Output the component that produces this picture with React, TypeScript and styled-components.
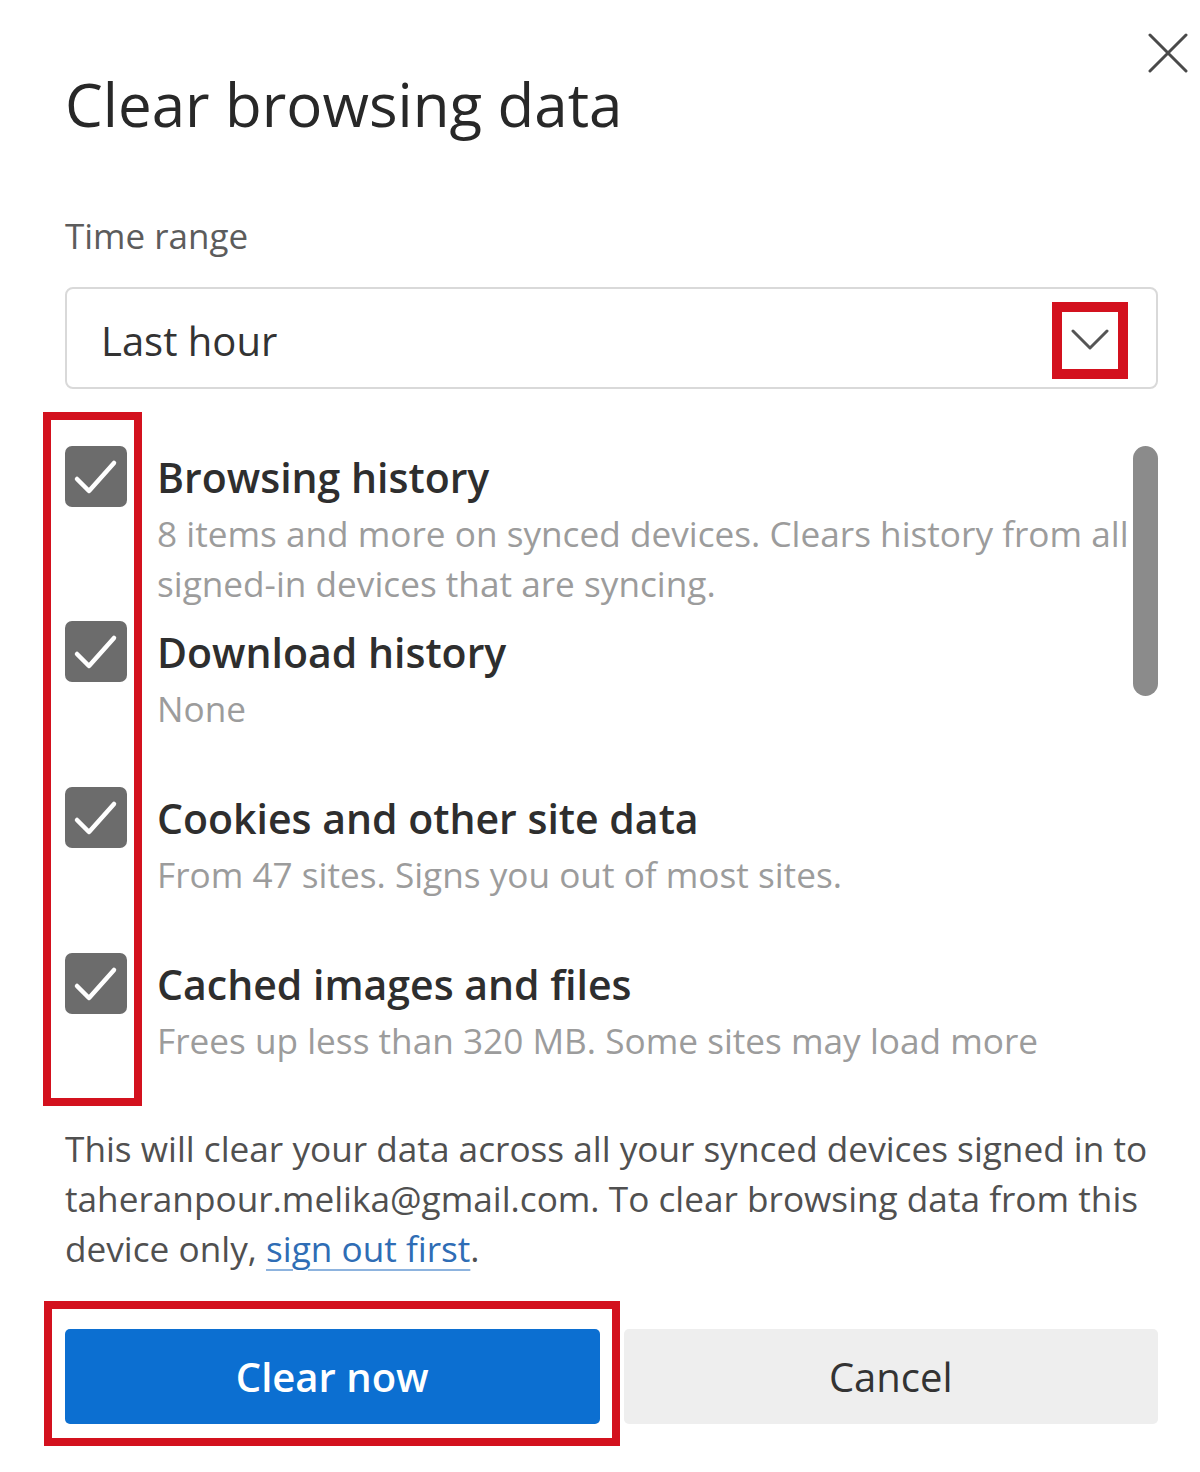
import React from 'react';
import styled, { createGlobalStyle } from 'styled-components';

const GlobalStyle = createGlobalStyle`
  html, body {
    margin: 0;
    padding: 0;
    background: #ffffff;
  }
  body {
    font-family: 'Open Sans', 'Noto Sans', sans-serif;
  }
  * {
    box-sizing: border-box;
  }
`;

const Dialog = styled.div`
  width: 1200px;
  min-height: 1472px;
  padding: 0 42px 0 65px;
  background: #ffffff;
`;

const Header = styled.div`
  display: flex;
  justify-content: space-between;
  align-items: flex-start;
`;

const Title = styled.h1`
  margin: 64px 0 0;
  font-size: 60px;
  line-height: 80px;
  font-weight: 500;
  color: #282828;
`;

const CloseButton = styled.button`
  margin: 33px -30px 0 0;
  width: 40px;
  height: 40px;
  padding: 0;
  border: 0;
  background: none;
  display: flex;
`;

const Label = styled.div`
  margin-top: 69px;
  font-size: 35px;
  line-height: 46px;
  color: #5c5c5c;
`;

const Select = styled.div`
  margin-top: 28px;
  height: 102px;
  border: 2px solid #d9d9d9;
  border-radius: 8px;
  display: flex;
  align-items: center;
  padding: 0 28px 0 34px;
`;

const SelectValue = styled.span`
  flex: 1;
  padding-top: 6px;
  font-size: 40px;
  line-height: 54px;
  color: #333333;
`;

const ChevronBox = styled.span`
  width: 76px;
  height: 77px;
  margin-top: 4px;
  border: 10px solid #d3111e;
  display: flex;
  align-items: center;
  justify-content: center;
  background: #ffffff;
`;

const ListArea = styled.div`
  position: relative;
  margin-top: 57px;
  display: flex;
`;

const ScrollView = styled.div`
  flex: 1;
  height: 677px;
  overflow: hidden;
`;

const Row = styled.div`
  display: flex;
  gap: 30px;
  min-height: 166px;
  padding-bottom: 13px;
`;

const Checkbox = styled.span`
  flex-shrink: 0;
  width: 62px;
  height: 61px;
  border-radius: 7px;
  background: #6c6c6c;
  display: flex;
`;

const RowText = styled.div`
  display: flex;
  flex-direction: column;
`;

const RowTitle = styled.div`
  font-size: 41px;
  line-height: 62px;
  font-weight: 600;
  color: #2e2e2e;
  white-space: nowrap;
`;

const RowDesc = styled.div`
  font-size: 35.2px;
  line-height: 50px;
  color: #9c9c9c;
  white-space: nowrap;
`;

const ScrollTrack = styled.div`
  width: 25px;
  margin-left: 4px;
`;

const Thumb = styled.div`
  height: 250px;
  border-radius: 13px;
  background: #8b8b8b;
`;

const Highlight = styled.div<{ $left: number; $top: number; $width: number; $height: number }>`
  position: absolute;
  left: ${p => p.$left}px;
  top: ${p => p.$top}px;
  width: ${p => p.$width}px;
  height: ${p => p.$height}px;
  border: 8px solid #d3111e;
  pointer-events: none;
`;

const Notice = styled.p`
  margin: 0;
  font-size: 35.2px;
  line-height: 50px;
  color: #505050;
  white-space: nowrap;
`;

const Link = styled.a`
  color: #2f6db5;
  text-decoration: underline;
  text-decoration-color: #8db3de;
  text-decoration-thickness: 2px;
  text-underline-offset: 7px;
`;

const Buttons = styled.div`
  margin-top: 56px;
  display: grid;
  grid-template-columns: 1fr 1fr;
  gap: 24px;
`;

const PrimaryWrap = styled.div`
  position: relative;
`;

const Button = styled.button<{ $primary?: boolean }>`
  width: 100%;
  height: 95px;
  border: 0;
  border-radius: 5px;
  font-family: 'Open Sans', 'Noto Sans', sans-serif;
  font-size: ${p => (p.$primary ? 40 : 40)}px;
  font-weight: ${p => (p.$primary ? 600 : 400)};
  color: ${p => (p.$primary ? '#ffffff' : '#333333')};
  background: ${p => (p.$primary ? '#0c6fd1' : '#eeeeee')};
`;

const CheckMark = () => (
  <svg width="62" height="61" viewBox="0 0 62 61">
    <path d="M12 33 L24 45 L49 17" fill="none" stroke="#ffffff" strokeWidth="4.5" strokeLinecap="round" strokeLinejoin="round" />
  </svg>
);

const items = [
  {
    title: 'Browsing history',
    lines: ['8 items and more on synced devices. Clears history from all', 'signed-in devices that are syncing.'],
  },
  { title: 'Download history', lines: ['None'] },
  { title: 'Cookies and other site data', lines: ['From 47 sites. Signs you out of most sites.'] },
  { title: 'Cached images and files', lines: ['Frees up less than 320 MB. Some sites may load more'] },
];

const App: React.FC = () => {
  return (
    <Dialog>
      <GlobalStyle />
      <Header>
        <Title>Clear browsing data</Title>
        <CloseButton aria-label="Close">
          <svg width="40" height="40" viewBox="0 0 40 40">
            <path d="M2 2 L38 38 M38 2 L2 38" stroke="#4a4a4a" strokeWidth="3" strokeLinecap="round" />
          </svg>
        </CloseButton>
      </Header>

      <Label>Time range</Label>
      <Select>
        <SelectValue>Last hour</SelectValue>
        <ChevronBox>
          <svg width="38" height="22" viewBox="0 0 38 22">
            <path d="M2 2 L19 19 L36 2" fill="none" stroke="#555555" strokeWidth="3" strokeLinecap="round" strokeLinejoin="round" />
          </svg>
        </ChevronBox>
      </Select>

      <ListArea>
        <ScrollView>
          {items.map(item => (
            <Row key={item.title}>
              <Checkbox>
                <CheckMark />
              </Checkbox>
              <RowText>
                <RowTitle>{item.title}</RowTitle>
                {item.lines.map(line => (
                  <RowDesc key={line}>{line}</RowDesc>
                ))}
              </RowText>
            </Row>
          ))}
        </ScrollView>
        <ScrollTrack>
          <Thumb />
        </ScrollTrack>
        <Highlight $left={-22} $top={-34} $width={99} $height={694} />
      </ListArea>

      <Notice>
        This will clear your data across all your synced devices signed in to
        <br />
        taheranpour.melika@gmail.com. To clear browsing data from this
        <br />
        device only, <Link href="#">sign out first</Link>.
      </Notice>

      <Buttons>
        <PrimaryWrap>
          <Button $primary>Clear now</Button>
          <Highlight $left={-21} $top={-28} $width={576} $height={145} />
        </PrimaryWrap>
        <Button>Cancel</Button>
      </Buttons>
    </Dialog>
  );
};

export default App;
